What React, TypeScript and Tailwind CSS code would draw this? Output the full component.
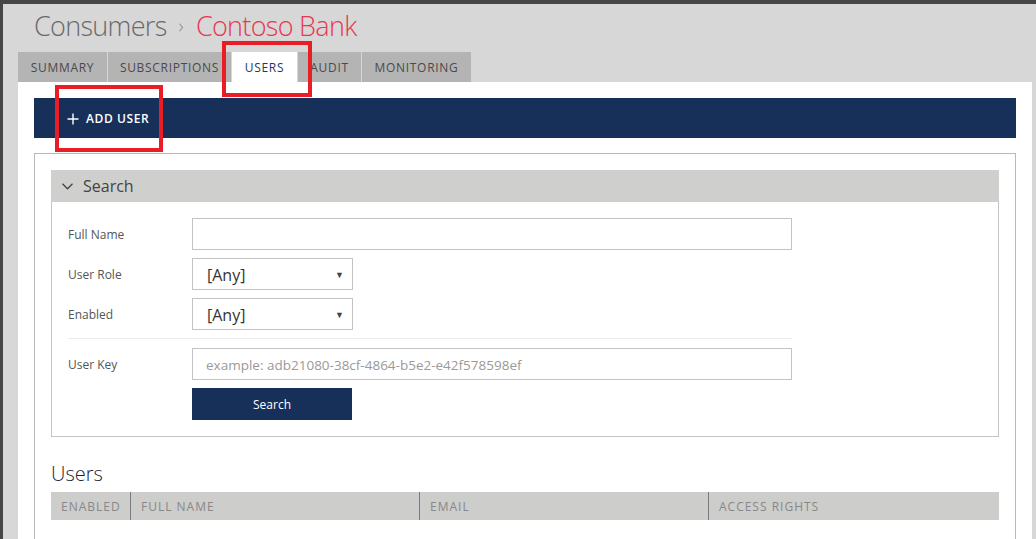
import React from "react";

const tabs = [
  { label: "Summary", w: "w-[89px]", active: false },
  { label: "Subscriptions", w: "w-[123px]", active: false },
  { label: "Users", w: "w-[65px]", active: true },
  { label: "Audit", w: "w-[63px]", active: false },
  { label: "Monitoring", w: "w-[109px]", active: false },
];

const columns = [
  { label: "Enabled", w: "w-[79px]" },
  { label: "Full Name", w: "w-[289px]" },
  { label: "Email", w: "w-[289px]" },
  { label: "Access Rights", w: "flex-1" },
];

function SelectBox() {
  return (
    <div className="flex items-center justify-between w-[161px] h-[32px] border border-[#c3c3c3] bg-white pl-[14px] pr-[8px]">
      <span className="text-[16px] text-[#333] leading-none relative top-[1px]">[Any]</span>
      <span className="text-[9px] text-[#444] leading-none">▼</span>
    </div>
  );
}

function FormRow({ label, children }: { label: string; children: React.ReactNode }) {
  return (
    <div className="flex items-center h-[32px]">
      <div className="w-[124px] text-[12px] text-[#555] relative top-[1px]">{label}</div>
      {children}
    </div>
  );
}

export default function App() {
  return (
    <div
      className="relative min-h-screen h-[539px] overflow-hidden bg-[#464646] pt-[4px] pl-[3px]"
      style={{ fontFamily: '"Open Sans", "Noto Sans", sans-serif' }}
    >
      <div className="h-full bg-[#d7d7d7] pl-[15px] pr-[4px]">
        {/* Header */}
        <div className="h-[48px] pt-[4px] pl-[16px]">
          <h1 className="text-[27px] leading-[36px] font-light tracking-[-0.7px]">
            <span className="text-[#6a6a6a]">Consumers</span>
            <span className="text-[#8a8a8a] text-[20px] ml-[12px] mr-[13px] relative top-[-3px]">›</span>
            <span className="text-[#e8384f]">Contoso Bank</span>
          </h1>
        </div>

        {/* Tabs */}
        <div className="flex gap-[1px] h-[30px]">
          {tabs.map((t) => (
            <div
              key={t.label}
              className={`${t.w} flex items-center justify-center pt-[1px] uppercase text-[12px] tracking-[0.7px] ${
                t.active ? "bg-white text-[#1d3a66]" : "bg-[#b4b4b4] text-[#4a4a4a]"
              }`}
            >
              {t.label}
            </div>
          ))}
        </div>

        {/* Content panel */}
        <div className="bg-white h-full px-[16px] pt-[16px]">
          <div className="flex items-center h-[40px] bg-[#16305a] pl-[33px] pt-[1px] text-white">
            <svg width="12" height="12" viewBox="0 0 12 12" className="mr-[7px]">
              <path d="M6 0.5V11.5M0.5 6H11.5" stroke="#fff" strokeWidth="1.4" fill="none" />
            </svg>
            <span className="text-[12px] font-semibold tracking-[0.6px]">ADD USER</span>
          </div>

          <div className="mt-[15px] border border-[#bababa] h-[400px] px-[16px] pt-[16px]">
            {/* Search panel */}
            <div>
              <div className="flex items-center h-[32px] bg-[#cfcfcd] pl-[11px]">
                <svg width="11" height="7" viewBox="0 0 11 7" className="mr-[10px]">
                  <polyline points="0.5,0.8 5.5,5.8 10.5,0.8" fill="none" stroke="#444" strokeWidth="1.3" />
                </svg>
                <span className="text-[16px] text-[#444]">Search</span>
              </div>
              <div className="border border-t-0 border-[#c4c4c4] px-[16px] pt-[16px] pb-[16px] flex flex-col gap-[8px]">
                <FormRow label="Full Name">
                  <div className="w-[600px] h-[32px] border border-[#c3c3c3]" />
                </FormRow>
                <FormRow label="User Role">
                  <SelectBox />
                </FormRow>
                <FormRow label="Enabled">
                  <SelectBox />
                </FormRow>
                <div className="w-[724px] h-[1px] bg-[#ebebeb] mb-[1px]" />
                <FormRow label="User Key">
                  <div className="flex items-center w-[600px] h-[32px] border border-[#c3c3c3] pl-[13px] pt-[2px] text-[13.5px] text-[#9a9a9a]">
                    example: adb21080-38cf-4864-b5e2-e42f578598ef
                  </div>
                </FormRow>
                <div className="flex">
                  <div className="w-[124px]" />
                  <div className="w-[160px] h-[32px] bg-[#16305a] pt-[2px] text-white text-[12px] flex items-center justify-center">
                    Search
                  </div>
                </div>
              </div>
            </div>

            {/* Users */}
            <h2 className="mt-[23px] text-[20px] leading-[28px] font-light text-[#1b2433]">Users</h2>
            <div className="mt-[4px] flex h-[28px] bg-[#cdcdcb]">
              {columns.map((c, i) => (
                <div
                  key={c.label}
                  className={`${c.w} flex items-center pl-[10px] pt-[2px] uppercase text-[12px] tracking-[1px] text-[#888] ${
                    i > 0 ? "border-l border-[#7a7a7a]" : ""
                  }`}
                >
                  {c.label}
                </div>
              ))}
            </div>
          </div>
        </div>
      </div>

      {/* Annotation boxes */}
      <div className="absolute left-[222px] top-[41px] w-[90px] h-[56px] border-[4px] border-[#e81d25]" />
      <div className="absolute left-[55px] top-[85px] w-[108px] h-[67px] border-[4px] border-[#e81d25]" />
    </div>
  );
}
